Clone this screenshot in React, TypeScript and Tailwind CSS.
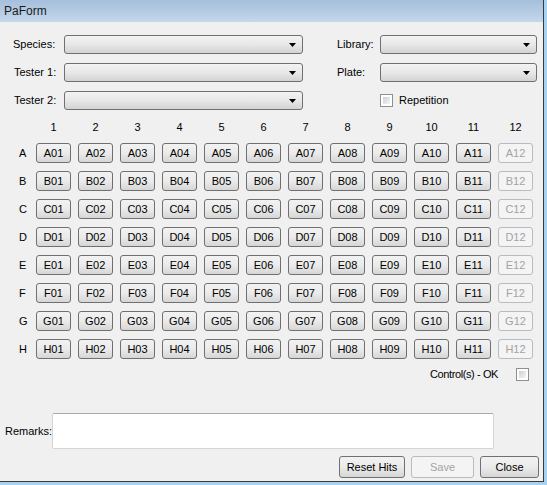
const font = { fontFamily: '"Liberation Sans", Arial, sans-serif' };

const rows = ["A", "B", "C", "D", "E", "F", "G", "H"];
const cols = [1, 2, 3, 4, 5, 6, 7, 8, 9, 10, 11, 12];

const Combo = ({ w }: { w: string }) => (
  <div
    className={`${w} h-[19px] rounded-[3px] border border-[#707070] bg-gradient-to-b from-[#f3f3f3] via-[#e8e8e8] to-[#d3d3d3] flex items-center justify-end pr-[6px]`}
  >
    <svg width="7" height="4" viewBox="0 0 7 4">
      <path d="M0 0h7L3.5 4z" fill="#000" />
    </svg>
  </div>
);

const Check = () => (
  <div className="w-[13px] h-[13px] shrink-0 border border-[#8e8f8f] bg-white p-[2px]">
    <div className="w-full h-full bg-gradient-to-br from-[#cbcfd5] to-[#f6f6f6]" />
  </div>
);

const WellButton = ({ label, disabled }: { label: string; disabled?: boolean }) => (
  <div
    className={
      disabled
        ? "w-[35px] h-[20px] rounded-[3px] border border-[#b8bcbf] bg-[#f4f4f4] text-[#a3a3a3] text-[11px] flex items-center justify-center"
        : "w-[35px] h-[20px] rounded-[3px] border border-[#707070] bg-gradient-to-b from-[#f2f2f2] via-[#ebebeb] to-[#d6d6d6] text-black text-[11px] flex items-center justify-center"
    }
  >
    {label}
  </div>
);

const BottomButton = ({ label, w, disabled }: { label: string; w: string; disabled?: boolean }) => (
  <div
    className={
      disabled
        ? `${w} h-[22px] rounded-[3px] border border-[#b8bcbf] bg-[#f4f4f4] text-[#a3a3a3] text-[11px] flex items-center justify-center`
        : `${w} h-[22px] rounded-[3px] border border-[#707070] bg-gradient-to-b from-[#f2f2f2] via-[#ebebeb] to-[#d6d6d6] text-black text-[11px] flex items-center justify-center`
    }
  >
    {label}
  </div>
);

const App = () => {
  return (
    <div className="w-[547px] h-[485px] bg-[#a8d2f0]" style={font}>
      <div className="w-[544px] h-[482px] bg-[#f0f0f0] border-r border-b border-[#3a3a3a] flex flex-col text-[11px] text-black">
        <div className="h-[22px] shrink-0 bg-gradient-to-b from-[#a5bfdc] to-[#c4d7eb] flex items-center pl-[4px] text-[12px] text-[#1a1a1a]">
          PaForm
        </div>

        <div className="flex pt-[13px]">
          <div className="flex flex-col gap-[9px] pl-[13px] shrink-0">
            <div className="flex items-center">
              <span className="w-[51px] shrink-0">Species:</span>
              <Combo w="w-[239px] shrink-0" />
            </div>
            <div className="flex items-center">
              <span className="w-[51px] shrink-0 pl-[1px]">Tester 1:</span>
              <Combo w="w-[239px] shrink-0" />
            </div>
            <div className="flex items-center">
              <span className="w-[51px] shrink-0 pl-[1px]">Tester 2:</span>
              <Combo w="w-[239px] shrink-0" />
            </div>
          </div>
          <div className="flex flex-1 flex-col gap-[9px] pl-[34px] pr-[6px]">
            <div className="flex items-center">
              <span className="w-[43px] shrink-0">Library:</span>
              <Combo w="flex-1" />
            </div>
            <div className="flex items-center">
              <span className="w-[43px] shrink-0">Plate:</span>
              <Combo w="flex-1" />
            </div>
            <div className="flex items-center h-[19px] pl-[43px] gap-[6px]">
              <Check />
              <span>Repetition</span>
            </div>
          </div>
        </div>

        <div className="grid grid-cols-[29px_repeat(12,35px)] gap-x-[7px] gap-y-[8px] mt-[10px]">
          <div className="h-[15px]" />
          {cols.map((c) => (
            <div key={c} className="h-[15px] flex items-center justify-center">
              {c}
            </div>
          ))}
          {rows.map((r) => [
            <div key={r} className="h-[20px] flex items-center pl-[19px]">
              {r}
            </div>,
            ...cols.map((c) => (
              <WellButton
                key={r + c}
                label={r + String(c).padStart(2, "0")}
                disabled={c === 12}
              />
            )),
          ])}
        </div>

        <div className="flex items-center justify-end gap-[18px] pr-[14px] mt-[9px] h-[13px]">
          <span className="tracking-[-0.4px]">Control(s) - OK</span>
          <Check />
        </div>

        <div className="flex items-center mt-[32px] pl-[5px]">
          <span className="w-[47px] shrink-0">Remarks:</span>
          <div className="w-[442px] h-[36px] bg-white border border-[#d5d5d5] border-t-[#ababab] rounded-[2px]" />
        </div>

        <div className="flex justify-end gap-[6px] pr-[4px] mt-[7px]">
          <BottomButton label="Reset Hits" w="w-[66px]" />
          <BottomButton label="Save" w="w-[63px]" disabled />
          <BottomButton label="Close" w="w-[59px]" />
        </div>
      </div>
    </div>
  );
};

export default App;
